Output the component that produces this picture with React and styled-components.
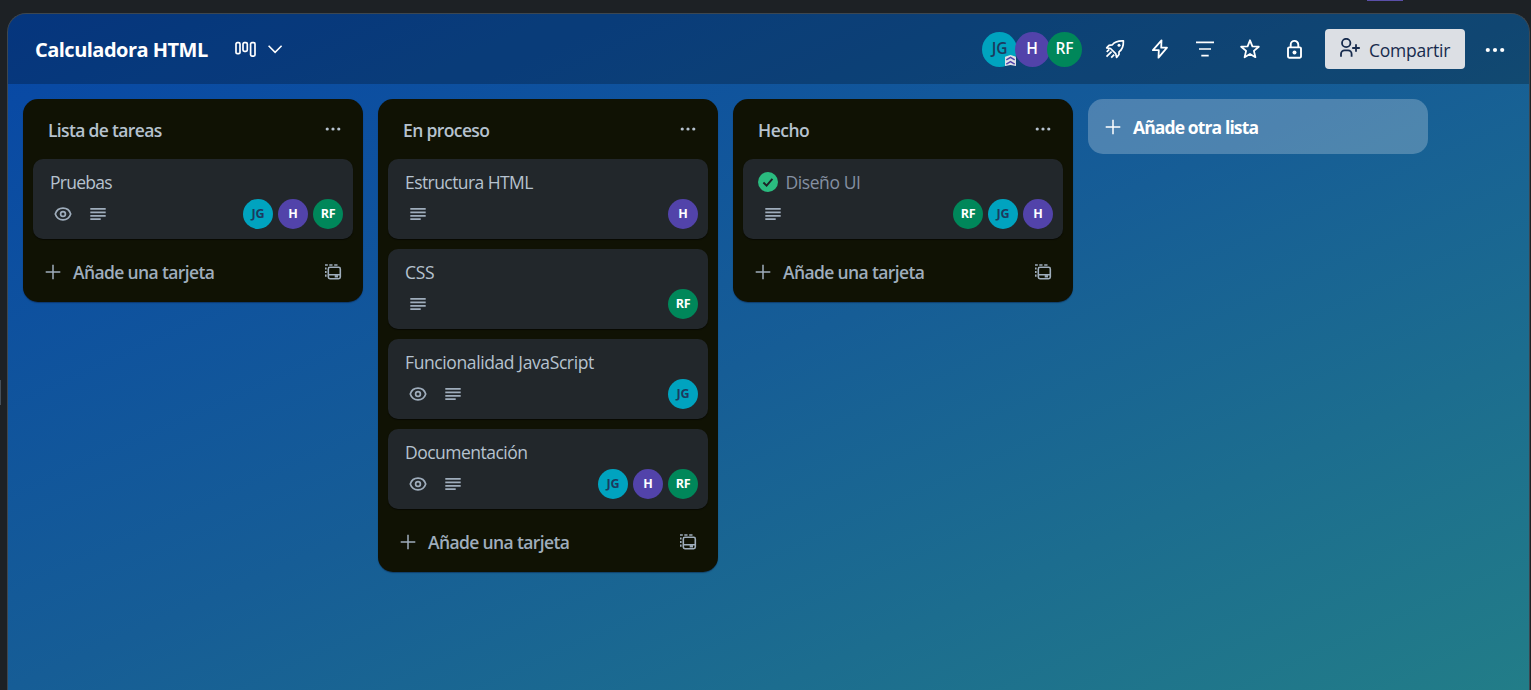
import React from "react";
import styled, { createGlobalStyle } from "styled-components";

const Global = createGlobalStyle`
  * { box-sizing: border-box; }
  body { margin: 0; background: #1d2125; overflow: hidden; font-family: "Open Sans", "Noto Sans", sans-serif; }
  button { font: inherit; border: 0; background: none; padding: 0; color: inherit; }
  svg { display: block; flex: none; }
`;

const Page = styled.div`
  height: 690px;
  padding: 13px 1px 0 7px;
  background: #1d2125;
  position: relative;
`;
const TopAccent = styled.i`
  position: absolute;
  top: 0;
  left: 1367px;
  width: 36px;
  height: 1px;
  background: #5a4fa8;
`;
const SideHandle = styled.i`
  position: absolute;
  top: 380px;
  left: 0;
  width: 1px;
  height: 25px;
  background: #454f59;
`;
const Board = styled.main`
  height: 677px;
  border: 1px solid #3d4750;
  border-bottom: 0;
  border-radius: 19px 19px 0 0;
  overflow: hidden;
  background: linear-gradient(to bottom right, #0747a6 0%, #165d96 50%, #227d88 100%);
`;
const Header = styled.header`
  height: 70px;
  display: flex;
  align-items: center;
  background: rgba(0, 0, 0, 0.24);
  color: #fff;
  padding: 0 23px 0 27px;
`;
const Text = styled.span`
  white-space: nowrap;
  font-size: ${(p) => p.$size || 17.5}px;
  font-weight: ${(p) => p.$weight || 400};
  letter-spacing: ${(p) => p.$track || 0}px;
  line-height: 24px;
`;
const BoardName = styled(Text)`
  width: 174px;
  padding-top: 1px;
`;
const ViewSwitch = styled.button`
  display: flex;
  align-items: center;
  gap: 8px;
  margin-left: 26px;
`;
const Members = styled.div`
  display: flex;
  margin-left: auto;
  margin-right: 23px;
`;
const palette = {
  JG: ["#00a3bf", "#1c3a5e"],
  H: ["#5243aa", "#fff"],
  RF: ["#00875a", "#fff"],
};
const Avatar = styled.span`
  position: relative;
  display: flex;
  align-items: center;
  justify-content: center;
  width: ${(p) => p.$size}px;
  height: ${(p) => p.$size}px;
  border-radius: 50%;
  background: ${(p) => palette[p.$who][0]};
  color: ${(p) => palette[p.$who][1]};
  font-weight: ${(p) => (p.$size > 30 ? 600 : 700)};
  font-size: ${(p) => (p.$size > 30 ? 15.5 : 12.5)}px;
  letter-spacing: -0.2px;
  line-height: 1;
`;
const HeaderAvatar = styled(Avatar)`
  & + & { margin-left: -2.5px; }
`;
const AdminBadge = styled.span`
  position: absolute;
  right: 1px;
  bottom: 1px;
`;
const Tools = styled.div`
  display: flex;
  gap: 25px;
`;
const Share = styled.button`
  display: flex;
  align-items: center;
  gap: 9px;
  width: 140px;
  height: 40px;
  margin: 0 20px;
  padding-left: 14px;
  border-radius: 4px;
  background: #dcdfe4;
  color: #172b4d;
  span { padding-top: 2px; }
`;
const MoreSlot = styled.span`
  width: 21px;
  padding-top: 1px;
`;
const Lists = styled.div`
  display: flex;
  align-items: flex-start;
  gap: 15px;
  padding: 15px;
`;
const List = styled.section`
  width: 340px;
  padding: 10px 10px 9px;
  border-radius: 15px;
  background: #101204;
  box-shadow: 0 1px 1px rgba(9, 30, 66, 0.5);
  color: #b6c2cf;
`;
const ListHead = styled.div`
  display: flex;
  justify-content: space-between;
  height: 50px;
  padding: 9px 12px 0 15px;
  svg { margin-top: 3px; }
`;
const Cards = styled.div`
  display: grid;
  gap: 10px;
`;
const Card = styled.article`
  height: 80px;
  padding: 11px 10px 0;
  border-radius: 10px;
  background: #22272b;
  box-shadow: 0 1px 1px rgba(0, 0, 0, 0.5);
`;
const CardTitle = styled.div`
  display: flex;
  align-items: center;
  gap: 7.5px;
  height: 24px;
  padding-left: ${(p) => (p.$done ? 5 : 7)}px;
  color: ${(p) => (p.$done ? "#8590a2" : "#b6c2cf")};
`;
const CardFoot = styled.div`
  display: flex;
  align-items: center;
  gap: 15px;
  height: 30px;
  margin-top: 5px;
  padding-left: 10px;
  color: #9fadbc;
`;
const CardMembers = styled.div`
  display: flex;
  gap: 5px;
  margin-left: auto;
`;
const ListFoot = styled.div`
  display: flex;
  align-items: center;
  height: 45px;
  margin-top: 9px;
  padding: 2px 10px 0;
  color: #9fadbc;
  svg:last-child { margin-left: auto; }
  span { margin-left: 10px; }
`;
const AddList = styled.button`
  display: flex;
  align-items: center;
  gap: 10px;
  width: 340px;
  height: 55px;
  padding: 0 0 0 15px;
  border-radius: 15px;
  background: rgba(255, 255, 255, 0.24);
  color: #fff;
`;

const Icon = ({ size = 20, w = 1.5, children }) => (
  <svg width={size} height={size} viewBox="0 0 20 20" fill="none" stroke="currentColor" strokeWidth={w}>
    {children}
  </svg>
);
const Plus = () => <Icon w={1.5}><path d="M10 2.7v14.6M2.7 10h14.6" /></Icon>;
const Dots = ({ size = 20, r = 2 }) => (
  <Icon size={size}><g fill="currentColor" stroke="none"><circle cx="2.800" cy="10" r={r} /><circle cx="10" cy="10" r={r} /><circle cx="17.200" cy="10" r={r} /></g></Icon>
);
const Eye = () => (
  <Icon w={1.7}><path d="M2.300 10C3.500 6.300 6.500 4.200 10 4.200S16.500 6.300 17.700 10C16.500 13.700 13.500 15.800 10 15.800S3.500 13.700 2.300 10Z" /><circle cx="10" cy="10" r="2.400" /></Icon>
);
const Lines = () => (
  <Icon w={1.700}><path d="M2.300 4.900h15.400M2.300 8.300h15.400M2.300 11.800h15.400M2.300 15.200h10.400" /></Icon>
);
const Template = () => (
  <Icon w={1.600}>
    <rect x="5.300" y="5.300" width="12" height="11.400" rx="1.600" />
    <path d="M5.300 12.700h12M2.800 5.500v2M2.800 9v2M2.800 12.500v2.300M2.800 3.800v-.8h2M6.300 3h3.200M11.200 3h3.300" />
    <path d="M11.700 14.300h3.300" strokeWidth="2.400" />
  </Icon>
);
const Done = () => (
  <Icon><circle cx="10" cy="10" r="10" fill="#2abb7f" stroke="none" /><path d="M5.400 10.500l3.200 3.200 5.800-6.900" stroke="#1d2125" strokeWidth="1.900" /></Icon>
);
const BoardView = () => (
  <svg width="22" height="16" viewBox="0 0 22 16" fill="none" stroke="#fff" strokeWidth="1.700">
    <rect x="1" y="1.700" width="4" height="11" rx="1.300" />
    <rect x="8" y="1.700" width="4.300" height="8.600" rx="1.300" />
    <rect x="15.600" y="1.700" width="4.400" height="13.400" rx="1.300" />
  </svg>
);
const Chevron = () => (
  <Icon w={1.600}><path d="M3.600 6.800l6.500 6.500L16.600 6.800" /></Icon>
);
const Rocket = () => (
  <Icon w={1.700}>
    <path d="M7.300 5.900C9.300 2.700 12.500 1.600 18.400 1.800C18.600 7.500 17.300 10.800 14 12.900V15.500L11.600 18.400L10.700 14.600L5.500 9.500L1.700 8.900L4 6.300Z" strokeLinejoin="round" />
    <path d="M1.500 17.700l5.100-5.100M6.200 18.700l3-3.100M1.700 12.900l2.600-2.500" />
    <circle cx="14" cy="6.200" r="1.500" fill="currentColor" stroke="none" />
  </Icon>
);
const Bolt = () => (
  <Icon w={1.800}><path d="M11.500 1.300L2.900 11.200H8.800L8.500 18.700L17 8.700H11.200Z" strokeLinejoin="round" /></Icon>
);
const Filter = () => (
  <Icon w={1.700}><path d="M1 3.300h18M4 10h12M6.300 16.700h7.400" /></Icon>
);
const Star = () => (
  <Icon w={1.800}><path d="M10 1.300l2.400 6 6.400.400-4.900 4.200 1.500 6.300L10 14.900l-5.400 3.300 1.500-6.300L1.200 7.700l6.400-.400Z" strokeLinejoin="round" /></Icon>
);
const Lock = () => (
  <Icon w={1.900}><rect x="3" y="8.400" width="13" height="10.400" rx="1.200" /><path d="M5.700 8.400V5.700a3.800 3.800 0 0 1 7.600 0V8.400" /><circle cx="9.500" cy="13.500" r="2" fill="currentColor" stroke="none" /></Icon>
);
const PersonPlus = () => (
  <svg width="21" height="22" viewBox="0 0 21 22" fill="none" stroke="currentColor" strokeWidth="1.800">
    <circle cx="7.200" cy="5" r="4.200" />
    <path d="M2 18.700v-2.700a3.600 3.600 0 0 1 3.600-3.600h3.400a3.600 3.600 0 0 1 3.600 3.600v2.700M17 6.200v7.600M13.200 10h7.600" />
  </svg>
);
const AdminMark = () => (
  <svg width="11" height="11" viewBox="0 0 11 11" fill="none">
    <path d="M0 2.500Q0 1.700.7 1.500L4.700.2Q5.500 0 6.300.2L10.300 1.500Q11 1.700 11 2.500V11L5.500 10L0 11Z" fill="#dfe1e6" />
    <path d="M1.300 4.900L5.500 2.400L9.700 4.900M1.300 9.100L5.500 6.600L9.700 9.100" stroke="#5243aa" strokeWidth="1.500" />
  </svg>
);

const lists = [
  { title: "Lista de tareas", track: -0.66, cards: [{ name: "Pruebas", track: -0.72, watch: true, who: ["JG", "H", "RF"] }] },
  {
    title: "En proceso", track: -0.62, cards: [
      { name: "Estructura HTML", track: -0.57, who: ["H"] },
      { name: "CSS", track: -0.35, who: ["RF"] },
      { name: "Funcionalidad JavaScript", track: -0.39, watch: true, who: ["JG"] },
      { name: "Documentación", track: -0.52, watch: true, who: ["JG", "H", "RF"] },
    ],
  },
  { title: "Hecho", track: -0.5, cards: [{ name: "Diseño UI", track: -0.42, done: true, who: ["RF", "JG", "H"] }] },
];

export default function App() {
  return (
    <Page>
      <Global />
      <TopAccent />
      <SideHandle />
      <Board>
        <Header>
          <BoardName $size={20} $weight={700} $track={-0.52}>Calculadora HTML</BoardName>
          <ViewSwitch><BoardView /><Chevron /></ViewSwitch>
          <Members>
            {["JG", "H", "RF"].map((m) => (
              <HeaderAvatar key={m} $who={m} $size={35}>
                {m}
                {m === "JG" && <AdminBadge><AdminMark /></AdminBadge>}
              </HeaderAvatar>
            ))}
          </Members>
          <Tools><Rocket /><Bolt /><Filter /><Star /><Lock /></Tools>
          <Share><PersonPlus /><Text $weight={500} $track={-0.22}>Compartir</Text></Share>
          <MoreSlot><Dots r={2.1} /></MoreSlot>
        </Header>
        <Lists>
          {lists.map((l) => (
            <List key={l.title}>
              <ListHead><Text $weight={600} $track={l.track}>{l.title}</Text><Dots size={16} /></ListHead>
              <Cards>
                {l.cards.map((c) => (
                  <Card key={c.name}>
                    <CardTitle $done={c.done}>
                      {c.done && <Done />}
                      <Text $track={c.track}>{c.name}</Text>
                    </CardTitle>
                    <CardFoot>
                      {c.watch && <Eye />}
                      <Lines />
                      <CardMembers>
                        {c.who.map((m) => <Avatar key={m} $who={m} $size={30}>{m}</Avatar>)}
                      </CardMembers>
                    </CardFoot>
                  </Card>
                ))}
              </Cards>
              <ListFoot><Plus /><Text $weight={600} $track={-0.63}>Añade una tarjeta</Text><Template /></ListFoot>
            </List>
          ))}
          <AddList><Plus /><Text $weight={700} $track={-0.88}>Añade otra lista</Text></AddList>
        </Lists>
      </Board>
    </Page>
  );
}
